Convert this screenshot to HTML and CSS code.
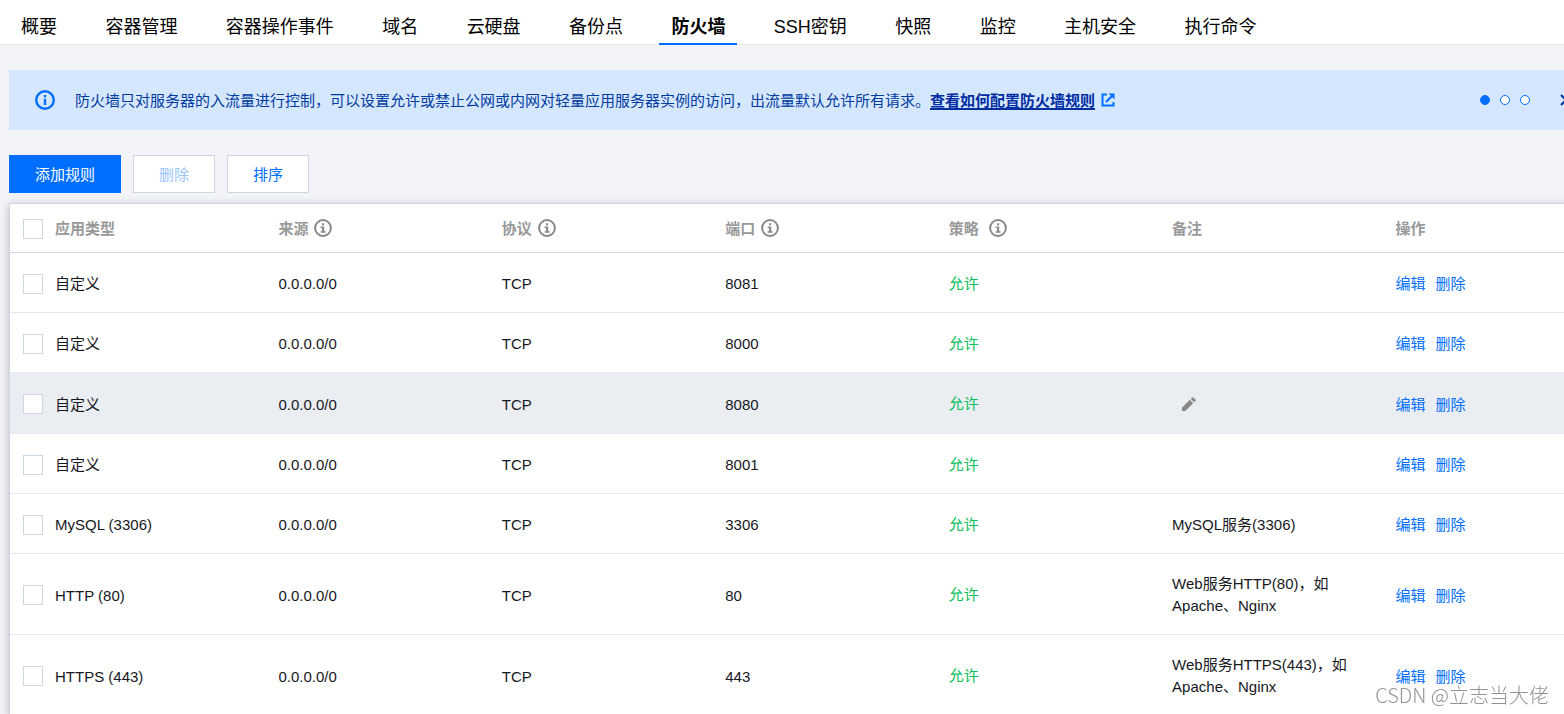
FILE: index.html
```html
<!DOCTYPE html>
<html lang="zh-CN">
<head>
<meta charset="utf-8">
<title>防火墙</title>
<link rel="stylesheet" href="styles.css">
</head>
<body>
<svg class="sprite" aria-hidden="true">
  <symbol id="i-info" viewBox="0 0 18 18">
    <circle cx="9" cy="9" r="7.9" fill="none" stroke="currentColor" stroke-width="2"/>
    <path d="M8 4.2h2.2v2H8zM6.6 7.6h3.6v4.7h1.4v1.5H6.6v-1.5h1.5V9H6.6z" fill="currentColor"/>
  </symbol>
  <symbol id="i-notice" viewBox="0 0 20 20">
    <circle cx="10" cy="10" r="8.8" fill="none" stroke="currentColor" stroke-width="2.4"/>
    <path d="M8.8 5h2.4v2.2H8.8zM8.8 8.8h2.4v6.2H8.8z" fill="currentColor"/>
  </symbol>
</svg>

<nav class="tabs" aria-label="实例">
  <div class="tabs-list">
    <a class="tab" href="#">概要</a>
    <a class="tab" href="#">容器管理</a>
    <a class="tab" href="#">容器操作事件</a>
    <a class="tab" href="#">域名</a>
    <a class="tab" href="#">云硬盘</a>
    <a class="tab" href="#">备份点</a>
    <a class="tab active" href="#" aria-current="page">防火墙</a>
    <a class="tab" href="#">SSH密钥</a>
    <a class="tab" href="#">快照</a>
    <a class="tab" href="#">监控</a>
    <a class="tab" href="#">主机安全</a>
    <a class="tab" href="#">执行命令</a>
  </div>
</nav>

<main class="main">
  <section class="notice">
    <svg class="notice-icon"><use href="#i-notice"/></svg>
    <p class="notice-text">防火墙只对服务器的入流量进行控制，可以设置允许或禁止公网或内网对轻量应用服务器实例的访问，出流量默认允许所有请求。<a class="notice-link" href="#">查看如何配置防火墙规则</a></p>
    <svg class="ext" viewBox="0 0 14 14" fill="none" stroke="currentColor" stroke-width="2"><path d="M6 1.5H1.5v11h11V9"/><path d="M5 9l6-6" stroke-width="2.2"/><path d="M7.6.5h5.9v5.9z" fill="currentColor" stroke="none"/></svg>
    <div class="dots">
      <button class="dot on" aria-label="1"></button>
      <button class="dot" aria-label="2"></button>
      <button class="dot" aria-label="3"></button>
    </div>
    <button class="close" aria-label="关闭"><svg viewBox="0 0 12 12"><path d="M1 1l10 10M11 1L1 11" stroke="currentColor" stroke-width="2"/></svg></button>
  </section>

  <div class="toolbar">
    <button class="btn primary">添加规则</button>
    <button class="btn" disabled>删除</button>
    <button class="btn">排序</button>
  </div>

  <table class="rules">
    <thead>
      <tr>
        <th class="check"><input type="checkbox" aria-label="全选"></th>
        <th>应用类型</th>
        <th><span class="head">来源<svg class="info"><use href="#i-info"/></svg></span></th>
        <th><span class="head">协议<svg class="info"><use href="#i-info"/></svg></span></th>
        <th><span class="head">端口<svg class="info"><use href="#i-info"/></svg></span></th>
        <th><span class="head wide">策略<svg class="info"><use href="#i-info"/></svg></span></th>
        <th>备注</th>
        <th>操作</th>
      </tr>
    </thead>
    <tbody>
      <tr>
        <td class="check"><input type="checkbox" aria-label="选择 8081"></td>
        <td>自定义</td><td>0.0.0.0/0</td><td>TCP</td><td>8081</td><td class="allow">允许</td><td class="remark"></td>
        <td><div class="ops"><a href="#">编辑</a><a href="#">删除</a></div></td>
      </tr>
      <tr>
        <td class="check"><input type="checkbox" aria-label="选择 8000"></td>
        <td>自定义</td><td>0.0.0.0/0</td><td>TCP</td><td>8000</td><td class="allow">允许</td><td class="remark"></td>
        <td><div class="ops"><a href="#">编辑</a><a href="#">删除</a></div></td>
      </tr>
      <tr class="hovered">
        <td class="check"><input type="checkbox" aria-label="选择 8080"></td>
        <td>自定义</td><td>0.0.0.0/0</td><td>TCP</td><td>8080</td><td class="allow">允许</td>
        <td class="remark"><button class="pencil" aria-label="编辑备注"><svg viewBox="0 0 16 16" fill="currentColor"><path d="M1 15v-3.6L9.4 3 13 6.6 4.6 15zM10.4 2l1.5-1.5q.6-.6 1.2 0l2.4 2.4q.6.6 0 1.2L14 5.6z"/></svg></button></td>
        <td><div class="ops"><a href="#">编辑</a><a href="#">删除</a></div></td>
      </tr>
      <tr>
        <td class="check"><input type="checkbox" aria-label="选择 8001"></td>
        <td>自定义</td><td>0.0.0.0/0</td><td>TCP</td><td>8001</td><td class="allow">允许</td><td class="remark"></td>
        <td><div class="ops"><a href="#">编辑</a><a href="#">删除</a></div></td>
      </tr>
      <tr>
        <td class="check"><input type="checkbox" aria-label="选择 3306"></td>
        <td>MySQL (3306)</td><td>0.0.0.0/0</td><td>TCP</td><td>3306</td><td class="allow">允许</td><td class="remark">MySQL服务(3306)</td>
        <td><div class="ops"><a href="#">编辑</a><a href="#">删除</a></div></td>
      </tr>
      <tr>
        <td class="check"><input type="checkbox" aria-label="选择 80"></td>
        <td>HTTP (80)</td><td>0.0.0.0/0</td><td>TCP</td><td>80</td><td class="allow">允许</td><td class="remark">Web服务HTTP(80)，如<br>Apache、Nginx</td>
        <td><div class="ops"><a href="#">编辑</a><a href="#">删除</a></div></td>
      </tr>
      <tr>
        <td class="check"><input type="checkbox" aria-label="选择 443"></td>
        <td>HTTPS (443)</td><td>0.0.0.0/0</td><td>TCP</td><td>443</td><td class="allow">允许</td><td class="remark">Web服务HTTPS(443)，如<br>Apache、Nginx</td>
        <td><div class="ops"><a href="#">编辑</a><a href="#">删除</a></div></td>
      </tr>
    </tbody>
  </table>
</main>
<div class="watermark">CSDN @立志当大佬</div>
</body>
</html>
```

FILE: styles.css
```css
* { box-sizing: border-box; }

html, body { overflow: hidden; }

body {
  margin: 0;
  height: 100vh;
  background: #f2f4f8;
  color: #16181d;
  font: 15px/22px "Liberation Sans", "Noto Sans CJK SC", sans-serif;
}

a { text-decoration: none; }
button { font: inherit; cursor: pointer; }
.sprite { display: none; }

.tabs {
  height: 45px;
  padding-left: 9px;
  background: #fff;
  border-bottom: 1px solid #e3e6ed;
}
.tabs-list {
  display: flex;
  justify-content: space-between;
  width: 81%;
}
.tab {
  height: 45px;
  padding: 11px 12px 0;
  color: #000;
  font-size: 18px;
  line-height: 32px;
  white-space: nowrap;
}
.tab.active {
  font-weight: 700;
  border-bottom: 2px solid #006eff;
}

/* The content area runs past the right edge of the window. */
.main { margin: 25px -46px 0 9px; }

.notice {
  display: flex;
  align-items: center;
  height: 60px;
  padding: 0 38px 0 26px;
  background: #d5e7ff;
  color: #003b9f;
}
.notice-icon {
  flex: none;
  width: 20px;
  height: 20px;
  margin-right: 20px;
  color: #006eff;
}
.notice-text { margin: 0; padding-top: 2px; white-space: nowrap; }
.notice-link {
  color: #002da0;
  font-weight: 700;
  text-decoration: underline;
  text-decoration-thickness: 2px;
  text-underline-offset: 2px;
}
.ext {
  flex: none;
  width: 14px;
  height: 14px;
  margin-left: 6px;
  color: #006eff;
}
.dots { display: flex; gap: 10px; margin-left: auto; }
.dot {
  width: 10px;
  height: 10px;
  padding: 0;
  border: 1px solid #006eff;
  border-radius: 50%;
  background: #fff;
}
.dot.on { background: #006eff; }
.close {
  width: 12px;
  height: 12px;
  margin-left: 30px;
  padding: 0;
  border: 0;
  background: none;
  color: #003b9f;
}
.close svg { display: block; }

.toolbar { display: flex; gap: 12px; margin: 25px 0 10px; }
.btn {
  height: 38px;
  padding: 2px 25px 0;
  border: 1px solid #cfd5de;
  background: #fff;
  color: #006eff;
}
.btn.primary {
  padding: 2px 26px 0;
  border: 0;
  background: #006eff;
  color: #fff;
}
.btn:disabled { color: #99c5ff; }

.rules {
  width: 100%;
  table-layout: fixed;
  border-collapse: separate;
  border-spacing: 0;
  border: 1px solid #cfd5de;
  background: #fff;
  box-shadow: 0 2px 8px rgba(54, 58, 80, .32);
}
.rules th {
  height: 49px;
  padding: 2px 10px 0;
  border-bottom: 1px solid #cfd5de;
  color: #999;
  text-align: left;
}
.rules td {
  height: 60px;
  padding: 20px 10px 17px;
  border-bottom: 1px solid #e5e8ed;
}
.rules .remark,
.rules .allow { padding: 19px 10px 17px; }
.rules .check { width: 35px; padding: 2px 0 0 13px; }
.check input {
  display: block;
  appearance: none;
  width: 20px;
  height: 20px;
  margin: 0;
  border: 1px solid #cfd5de;
  background: #fff;
}
.head { display: flex; align-items: center; gap: 6px; }
.head.wide { gap: 10px; }
.info { width: 18px; height: 18px; margin-bottom: 2px; color: #888; }
.hovered td { background: #eaedf2; }
.rules .allow { color: #0abf5b; }
.ops { display: flex; gap: 10px; }
.ops a { color: #006eff; }
.pencil {
  display: block;
  height: 24px;
  padding: 0 9px;
  border: 0;
  background: none;
  color: #888;
}
.pencil svg { display: block; width: 15px; height: 15px; }

.watermark {
  position: fixed;
  right: 15px;
  bottom: 6px;
  color: rgba(120, 120, 120, .8);
  font-family: "Noto Sans CJK SC", sans-serif;
  font-size: 20px;
  font-weight: 300;
  line-height: 26px;
  text-shadow: 1px 1px 0 #fff;
}
```
